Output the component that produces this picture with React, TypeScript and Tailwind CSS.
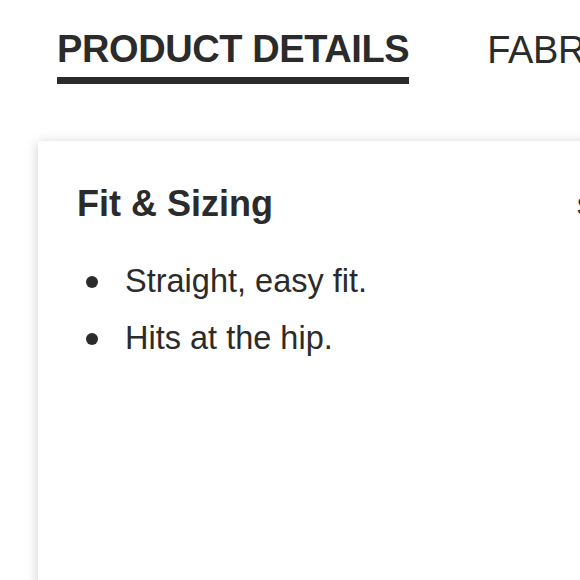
import React from "react";

const fitItems = ["Straight, easy fit.", "Hits at the hip."];

const App = () => {
  return (
    <div className="w-[580px] h-[580px] overflow-hidden bg-white text-[#2b2b2b] font-['Liberation_Sans',Arial,sans-serif]">
      {/* Tabs */}
      <div className="flex items-start gap-[78px] pl-[57px] pt-[30px] whitespace-nowrap">
        <div className="flex flex-col shrink-0">
          <span className="text-[38px] leading-none font-bold tracking-[-0.4px]">PRODUCT DETAILS</span>
          <div className="mt-[9px] h-[7px] bg-[#2b2b2b]" />
        </div>
        <span className="text-[38px] leading-none tracking-[-0.3px] pt-[1px] shrink-0">FABRIC &amp; CARE</span>
      </div>

      {/* Details card */}
      <div className="ml-[38px] mt-[57px] w-[720px] h-[600px] bg-white shadow-[0_2px_12px_rgba(0,0,0,0.2)] flex items-start pl-[39px] pt-[45px]">
        <div className="w-[500px] shrink-0">
          <h2 className="text-[36px] leading-none font-bold">Fit &amp; Sizing</h2>
          <ul className="mt-[31px]">
            {fitItems.map((item) => (
              <li key={item} className="flex items-center h-[57px] text-[32.5px] leading-[57px]">
                <span className="ml-[9px] w-[12px] h-[12px] rounded-full bg-[#2b2b2b] shrink-0" />
                <span className="ml-[27px]">{item}</span>
              </li>
            ))}
          </ul>
        </div>
        <div className="mt-[7px] whitespace-nowrap">
          <h3 className="text-[26px] leading-none font-bold">Size Guide</h3>
        </div>
      </div>
    </div>
  );
};

export default App;
